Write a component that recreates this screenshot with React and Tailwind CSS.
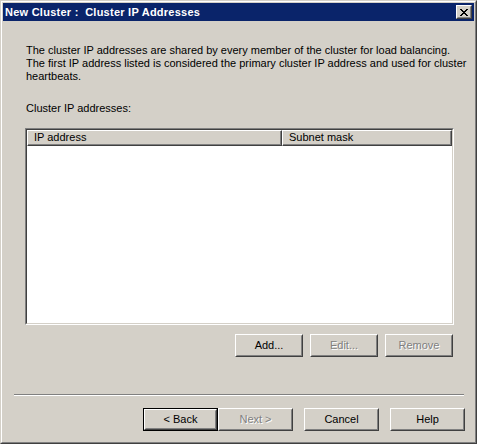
import React from "react";

function Btn({ children, w = 75, disabled = false, isDefault = false }) {
  const inner = (
    <div className="h-full w-full border border-t-white border-l-white border-b-[#404040] border-r-[#404040]">
      <div className="flex h-full w-full items-center justify-center border border-t-[#d4d0c8] border-l-[#d4d0c8] border-b-[#808080] border-r-[#808080]">
        <span
          className={
            disabled
              ? "text-[#808080] [text-shadow:1px_1px_0_#ffffff]"
              : "text-black"
          }
        >
          {children}
        </span>
      </div>
    </div>
  );
  return (
    <div
      className={isDefault ? "h-[23px] border border-black" : "h-[23px]"}
      style={{ width: w }}
    >
      {inner}
    </div>
  );
}

export default function App() {
  return (
    <div
      className="h-[444px] w-[477px] overflow-hidden bg-[#d4d0c8] text-[11px] leading-[13px] text-black"
      style={{ fontFamily: '"Liberation Sans", Arial, sans-serif' }}
    >
      <div className="h-full w-full border border-t-[#d4d0c8] border-l-[#d4d0c8] border-b-[#404040] border-r-[#404040]">
        <div className="flex h-full w-full flex-col border border-t-white border-l-white border-b-[#808080] border-r-[#808080] p-px">
          {/* Title bar */}
          <div className="flex h-[18px] items-center justify-between bg-[#0a246a] pl-[2px] pr-[2px]">
            <span className="text-[11px] font-bold tracking-[0.25px] text-white">
              New Cluster :&nbsp; Cluster IP Addresses
            </span>
            <div className="h-[14px] w-[16px] border border-t-white border-l-white border-b-[#404040] border-r-[#404040] bg-[#d4d0c8]">
              <div className="flex h-full w-full items-center justify-center border border-t-[#d4d0c8] border-l-[#d4d0c8] border-b-[#808080] border-r-[#808080]">
                <svg width="8" height="7" viewBox="0 0 8 7">
                  <path
                    d="M0 0h2v1h1v1h2V1h1V0h2v1H7v1H6v1H5v1h1v1h1v1h1v1H6V6H5V5H3v1H2v1H0V6h1V5h1V4h1V3H2V2H1V1H0z"
                    fill="#000"
                  />
                </svg>
              </div>
            </div>
          </div>

          {/* Content */}
          <div className="flex flex-1 flex-col">
            <div className="whitespace-nowrap pl-[23px] pt-[23px]">
              <p>
                The cluster IP addresses are shared by every member of the cluster for load balancing.
                <br />
                The first IP address listed is considered the primary cluster IP address and used for cluster
                <br />
                heartbeats.
              </p>
              <p className="mt-[19px]">Cluster IP addresses:</p>
            </div>

            {/* List view */}
            <div className="ml-[22px] mt-[13px] h-[197px] w-[429px] border border-t-[#808080] border-l-[#808080] border-b-white border-r-white">
              <div className="flex h-full w-full flex-col border border-t-[#404040] border-l-[#404040] border-b-[#d4d0c8] border-r-[#d4d0c8] bg-white">
                <div className="flex h-[16px]">
                  <div className="h-full w-[255px] border border-t-white border-l-white border-b-[#404040] border-r-[#404040] bg-[#d4d0c8]">
                    <div className="flex h-full items-center border-b border-r border-b-[#808080] border-r-[#808080] pl-[6px]">
                      IP address
                    </div>
                  </div>
                  <div className="h-full flex-1 border border-t-white border-l-white border-b-[#404040] border-r-[#404040] bg-[#d4d0c8]">
                    <div className="flex h-full items-center border-b border-r border-b-[#808080] border-r-[#808080] pl-[6px]">
                      Subnet mask
                    </div>
                  </div>
                </div>
              </div>
            </div>

            {/* List buttons */}
            <div className="ml-[232px] mt-[9px] flex gap-[7px]">
              <Btn w={68}>Add...</Btn>
              <Btn w={68} disabled>
                Edit...
              </Btn>
              <Btn w={68} disabled>
                Remove
              </Btn>
            </div>

            {/* Separator */}
            <div className="ml-[11px] mt-[37px] w-[450px] border-t border-b border-t-[#808080] border-b-white" />

            {/* Wizard buttons */}
            <div className="ml-[140px] mt-[12px] flex">
              <Btn isDefault>&lt; Back</Btn>
              <Btn disabled>Next &gt;</Btn>
              <div className="w-[11px]" />
              <Btn>Cancel</Btn>
              <div className="w-[11px]" />
              <Btn>Help</Btn>
            </div>
          </div>
        </div>
      </div>
    </div>
  );
}
